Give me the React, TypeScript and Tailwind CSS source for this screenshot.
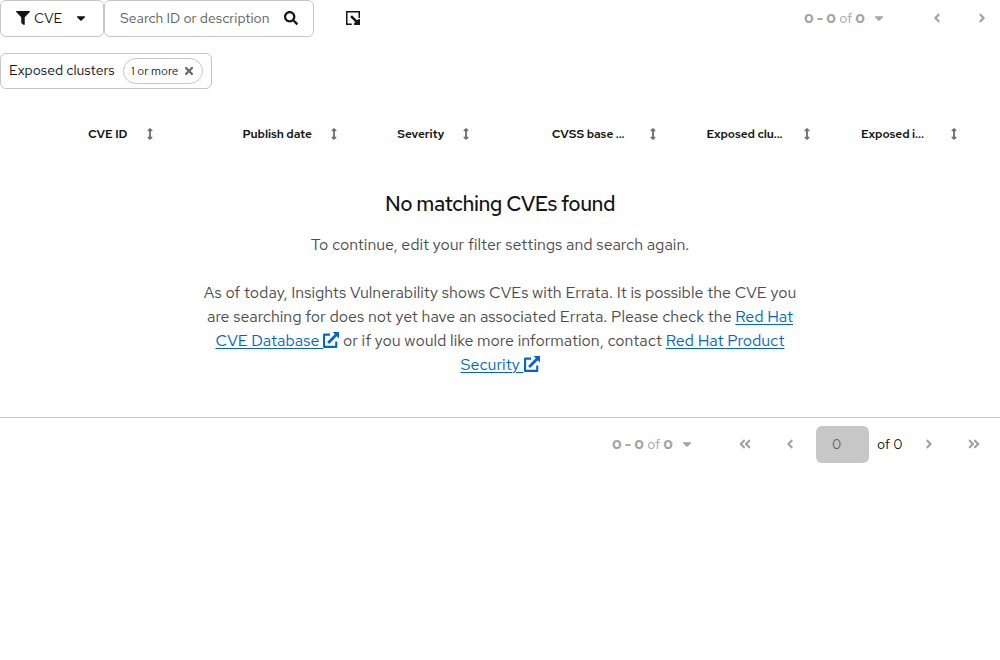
import React from "react";
import {
  FaFilter,
  FaCaretDown,
  FaSearch,
  FaTimes,
  FaAngleLeft,
  FaAngleRight,
  FaAngleDoubleLeft,
  FaAngleDoubleRight,
  FaArrowsAltV,
} from "react-icons/fa";

function ExportIcon() {
  return (
    <svg width="14" height="14" viewBox="0 0 14 14" fill="#151515">
      <path d="M0 0h14v7h-1.5V1.5h-11v11h4.2V14H0z" />
      <path d="M4.2 6.1 6 4.3l5 5L13.2 7.8 14 8.6V14H8.4l-.7-.9 1.5-2.2z" />
    </svg>
  );
}

function ExternalIcon() {
  return (
    <svg className="inline-block align-[-2px]" width="16" height="16" viewBox="0 0 16 16" fill="#0066cc">
      <path d="M0 2.4 .8 1.6H7v2.1H2.1v10.1h10.1V9.6h2.1v5.6l-.8.8H.8L0 15.2z" />
      <path d="M9.6 0H16v6.4l-2.2-2.2-7.7 7.7-2-2 7.7-7.7z" />
    </svg>
  );
}

const columns = [
  { label: "CVE ID", gap: "w-[68px]", width: "w-[154.6px]" },
  { label: "Publish date", gap: "w-[97px]", width: "w-[154.6px]" },
  { label: "Severity", gap: "w-[75px]", width: "w-[154.6px]" },
  { label: "CVSS base ...", gap: "w-[107px]", width: "w-[154.6px]" },
  { label: "Exposed clu...", gap: "w-[107px]", width: "w-[154.6px]" },
  { label: "Exposed i...", gap: "w-[99px]", width: "w-[139px]" },
];

function Count() {
  return (
    <span className="block w-[61px] whitespace-nowrap text-[14px] leading-[21px] text-[#a3a3a3]">
      <b className="font-bold">0 - 0</b> of <b className="font-bold">0</b>
    </span>
  );
}

const link = "text-[#0066cc] underline decoration-1 underline-offset-2";

export default function App() {
  return (
    <div className="h-[660px] w-[1000px] overflow-hidden bg-white font-['Red_Hat_Text',Inter,sans-serif] text-[14px] text-[#151515]">
      <header className="flex h-[37px] items-center">
        <button className="flex h-[37px] w-[104px] items-center rounded-[6px] border border-[#c7c7c7] pb-px pl-[15px]">
          <FaFilter size={14} />
          <span className="ml-1 w-[28px] text-[14px]">CVE</span>
          <FaCaretDown className="ml-3" size={14} />
        </button>
        <div className="flex h-[37px] w-[210px] items-center rounded-[6px] border border-[#c7c7c7] pb-px pl-[15px]">
          <span className="w-[164px] whitespace-nowrap text-[14px] text-[#606060]">Search ID or description</span>
          <FaSearch size={14} />
        </div>
        <button className="mb-px ml-[32px]"><ExportIcon /></button>
        <div className="mb-px ml-auto flex items-center text-[#a3a3a3]">
          <Count />
          <FaCaretDown className="ml-[7px]" size={14} />
          <FaAngleLeft className="ml-[44px]" size={14} />
          <FaAngleRight className="ml-[31px] mr-[11px]" size={14} />
        </div>
      </header>

      <section className="mt-4 flex h-[36px] w-[212px] items-center rounded-[6px] border border-[#c7c7c7] pl-2">
        <span className="mb-[2px] w-[114px] whitespace-nowrap text-[14px]">Exposed clusters</span>
        <span className="flex h-[26px] w-[80px] items-center rounded-full border border-[#c7c7c7] pl-[7px]">
          <span className="w-[52px] whitespace-nowrap pt-px text-[11.8px]">1 or more</span>
          <FaTimes className="text-[#6a6a6a]" size={12} />
        </span>
      </section>

      <div className="mt-[26px] flex h-[38px] items-center pl-[88px] font-semibold">
        {columns.map((c) => (
          <div key={c.label} className={`flex shrink-0 items-center ${c.width}`}>
            <div className={`flex items-center justify-between ${c.gap}`}>
              <span className="whitespace-nowrap text-[12px] tracking-[-0.1px]">{c.label}</span>
              <FaArrowsAltV className="shrink-0 text-[#707070]" size={12} />
            </div>
          </div>
        ))}
      </div>

      <main className="h-[265px] border-b border-[#c7c7c7] pt-[37px] text-center text-[16px] leading-6 text-[#4d4d4d]">
        <h1 className="text-[21px] font-medium leading-[28px] tracking-[-0.5px] text-[#151515]">No matching CVEs found</h1>
        <p className="mt-[15px]">To continue, edit your filter settings and search again.</p>
        <div className="mt-6 whitespace-nowrap">
          <p>As of today, Insights Vulnerability shows CVEs with Errata. It is possible the CVE you</p>
          <p>are searching for does not yet have an associated Errata. Please check the <a className={link}>Red Hat</a></p>
          <p><a className={link}>CVE Database <ExternalIcon /></a> or if you would like more information, contact <a className={link}>Red Hat Product</a></p>
          <p><a className={link}>Security <ExternalIcon /></a></p>
        </div>
      </main>

      <footer className="flex h-[53px] items-center pl-[612px] text-[#a3a3a3]">
        <div className="mb-px flex items-center">
          <Count />
          <FaCaretDown className="ml-[7px]" size={14} />
          <FaAngleDoubleLeft className="ml-[44px]" size={14} />
          <FaAngleLeft className="ml-[31px]" size={14} />
        </div>
        <span className="ml-[19px] flex h-[37px] w-[53px] items-center rounded-[6px] bg-[#c7c7c7] pl-4 text-[#606060]">0</span>
        <span className="ml-2 w-[26px] whitespace-nowrap text-[#151515]">of 0</span>
        <FaAngleRight className="mb-px ml-[19px]" size={14} />
        <FaAngleDoubleRight className="mb-px ml-[31px]" size={14} />
      </footer>
    </div>
  );
}
